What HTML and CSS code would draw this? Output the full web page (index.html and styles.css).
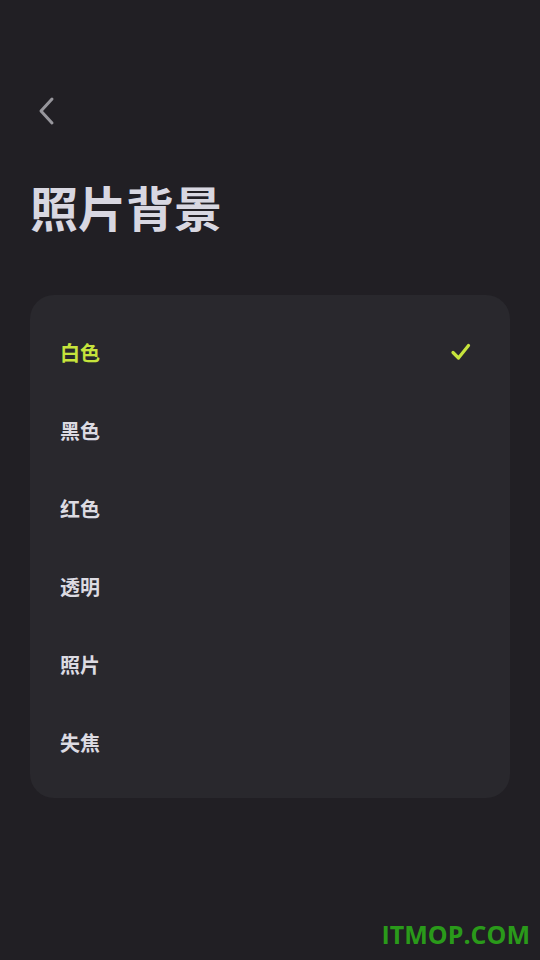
FILE: index.html
```html
<!DOCTYPE html>
<html lang="zh-CN">
<head>
    <meta charset="UTF-8">
    <meta name="viewport" content="width=device-width, initial-scale=1.0">
    <title>照片背景</title>
    <link rel="stylesheet" href="styles.css">
</head>
<body>
    <header class="top-bar">
        <button class="back-btn" aria-label="返回">
            <svg width="20" height="30" viewBox="0 0 20 30">
                <path d="M16 3 L5 15 L16 27" fill="none" stroke="#97969c" stroke-width="3" stroke-linecap="round" stroke-linejoin="round"/>
            </svg>
        </button>
    </header>
    <main>
        <h1 class="page-title">照片背景</h1>
        <ul class="option-list">
            <li class="option selected">
                <span>白色</span>
                <svg class="check" width="22" height="20" viewBox="0 0 22 20">
                    <path d="M3 10.5 L8.5 16 L18.5 3.5" fill="none" stroke="#c6e43c" stroke-width="3.2" stroke-linecap="round" stroke-linejoin="round"/>
                </svg>
            </li>
            <li class="option"><span>黑色</span></li>
            <li class="option"><span>红色</span></li>
            <li class="option"><span>透明</span></li>
            <li class="option"><span>照片</span></li>
            <li class="option"><span>失焦</span></li>
        </ul>
    </main>
    <div class="watermark">ITMOP.COM</div>
</body>
</html>
```

FILE: styles.css
```css
* {
    margin: 0;
    padding: 0;
    box-sizing: border-box;
}
body {
    background: #211f24;
    font-family: "Noto Sans CJK SC", "Noto Sans", sans-serif;
    color: #d9d8e0;
    width: 540px;
    height: 960px;
    position: relative;
    overflow: hidden;
}
.top-bar {
    padding: 96px 0 0 36px;
    height: 128px;
}
.back-btn {
    background: none;
    border: none;
    display: block;
    width: 20px;
    height: 30px;
}
.page-title {
    font-size: 48px;
    font-weight: 700;
    line-height: 64px;
    padding: 46px 0 0 30px;
    color: #d8d7e1;
}
.option-list {
    list-style: none;
    margin: 57px 30px 0;
    background: #29282d;
    border-radius: 24px;
    padding: 18px 0 17px;
}
.option {
    height: 78px;
    display: flex;
    align-items: center;
    justify-content: space-between;
    padding: 0 38px 0 30px;
    font-size: 20px;
    font-weight: 700;
    color: #dcdbe2;
}
.option.selected {
    color: #c6e43c;
}
.watermark {
    position: absolute;
    right: 10px;
    bottom: 9px;
    font-family: "Open Sans", "Liberation Sans", sans-serif;
    font-weight: 700;
    font-size: 25px;
    color: #2a9a1a;
}
```
